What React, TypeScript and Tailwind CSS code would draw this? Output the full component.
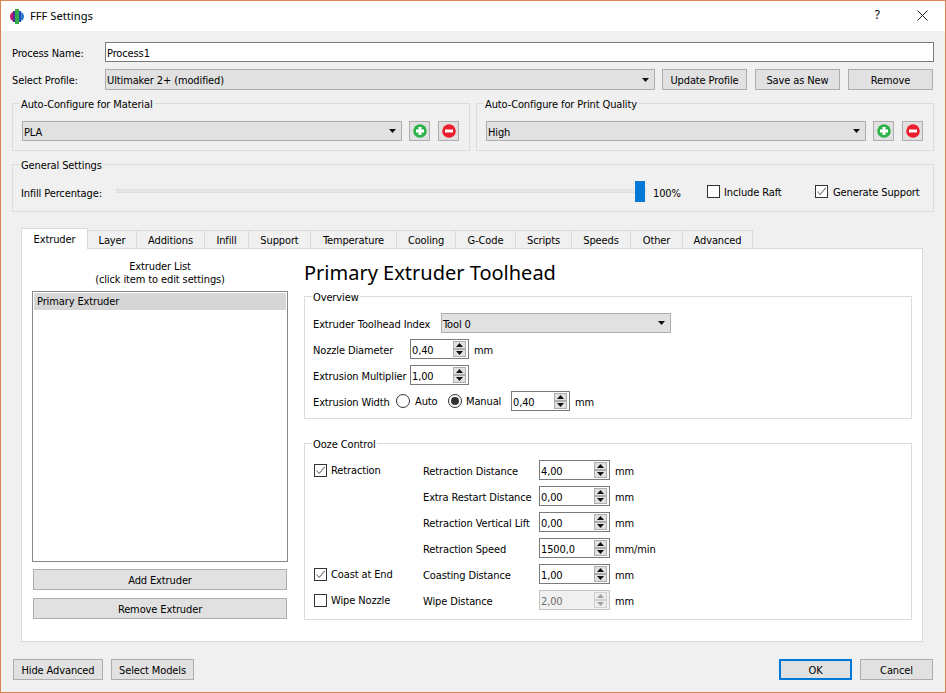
import type { ReactNode } from "react";

const tabs = [
  { name: "Layer", w: "w-[49px]" },
  { name: "Additions", w: "w-[68px]" },
  { name: "Infill", w: "w-[44px]" },
  { name: "Support", w: "w-[62px]" },
  { name: "Temperature", w: "w-[86px]" },
  { name: "Cooling", w: "w-[59px]" },
  { name: "G-Code", w: "w-[60px]" },
  { name: "Scripts", w: "w-[56px]" },
  { name: "Speeds", w: "w-[59px]" },
  { name: "Other", w: "w-[52px]" },
  { name: "Advanced", w: "w-[70px]" },
];

const oozeRows = [
  { label: "Retraction Distance", value: "4,00", unit: "mm" },
  { label: "Extra Restart Distance", value: "0,00", unit: "mm" },
  { label: "Retraction Vertical Lift", value: "0,00", unit: "mm" },
  { label: "Retraction Speed", value: "1500,0", unit: "mm/min" },
  { label: "Coasting Distance", value: "1,00", unit: "mm", check: "Coast at End", checked: true },
  { label: "Wipe Distance", value: "2,00", unit: "mm", check: "Wipe Nozzle", disabled: true },
];

function Button(props: { children: ReactNode; className?: string; focused?: boolean }) {
  return (
    <div
      className={`flex h-[21px] items-center justify-center bg-[#e1e1e1] pt-[2px] ${
        props.focused ? "border-2 border-[#0078d7]" : "border border-[#adadad]"
      } ${props.className ?? ""}`}
    >
      {props.children}
    </div>
  );
}

function Combo(props: { text: string; className?: string }) {
  return (
    <div
      className={`flex h-5 items-center justify-between border border-[#adadad] bg-[#e1e1e1] pl-px pr-[5px] ${props.className ?? ""}`}
    >
      <span className="pt-[2px]">{props.text}</span>
      <svg width="7" height="4" viewBox="0 0 7 4">
        <path d="M0 0h7L3.5 4z" fill="#111" />
      </svg>
    </div>
  );
}

function Group(props: { title: string; children: ReactNode; className?: string }) {
  return (
    <div className={`relative border border-[#dcdcdc] ${props.className ?? ""}`}>
      <span className="absolute left-[7px] top-[-6px] bg-[#f0f0f0] px-px leading-[13px]">
        {props.title}
      </span>
      {props.children}
    </div>
  );
}

function InnerGroup(props: { title: string; children: ReactNode; className?: string }) {
  return (
    <div className={`relative border border-[#dcdcdc] ${props.className ?? ""}`}>
      <span className="absolute left-[7px] top-[-6px] bg-white px-px leading-[13px]">
        {props.title}
      </span>
      {props.children}
    </div>
  );
}

function Check(props: { checked?: boolean }) {
  return (
    <span className="flex h-[13px] w-[13px] shrink-0 items-center justify-center border border-[#333] bg-white">
      {props.checked && (
        <svg width="11" height="11" viewBox="0 0 11 11" fill="none">
          <path d="M1.5 5.5 4.2 8.5 9.8 1.8" stroke="#7a7a7a" strokeWidth="1.1" />
        </svg>
      )}
    </span>
  );
}

function Radio(props: { checked?: boolean }) {
  return (
    <span className="flex h-[14px] w-[14px] shrink-0 items-center justify-center rounded-full border border-[#333] bg-white">
      {props.checked && <span className="h-2 w-2 rounded-full bg-[#333]" />}
    </span>
  );
}

function SpinArrow(props: { up?: boolean; disabled?: boolean }) {
  const fill = props.disabled ? "#a0a0a0" : "#111";
  return (
    <span
      className={`flex h-2 w-[13px] items-center justify-center border ${
        props.disabled ? "border-[#d0d0d0] bg-[#ececec]" : "border-[#adadad] bg-[#e1e1e1]"
      }`}
    >
      <svg width="7" height="4" viewBox="0 0 7 4">
        <path d={props.up ? "M3.5 0 7 4H0z" : "M0 0h7L3.5 4z"} fill={fill} />
      </svg>
    </span>
  );
}

function Spin(props: { value: string; className?: string; disabled?: boolean }) {
  return (
    <div
      className={`flex h-5 items-center justify-between border pl-px pr-[2px] ${
        props.disabled ? "border-[#c4c4c4] bg-[#f0f0f0] text-[#6d6d6d]" : "border-[#7a7a7a] bg-white"
      } ${props.className ?? ""}`}
    >
      <span className="pt-[2px]">{props.value}</span>
      <span className="flex flex-col">
        <SpinArrow up disabled={props.disabled} />
        <SpinArrow disabled={props.disabled} />
      </span>
    </div>
  );
}

function PlusMinus(props: { kind: "plus" | "minus" }) {
  return (
    <div className="flex h-5 w-[21px] shrink-0 items-center justify-center border border-[#adadad] bg-[#e1e1e1]">
      <svg width="14" height="14" viewBox="0 0 14 14">
        <circle cx="7" cy="7" r="6.8" fill={props.kind === "plus" ? "#2fb24c" : "#ed1c2e"} />
        {props.kind === "plus" ? (
          <path d="M5.5 3h3v2.5H11v3H8.5V11h-3V8.5H3v-3h2.5z" fill="#fff" />
        ) : (
          <path d="M3 5.5h8v3H3z" fill="#fff" />
        )}
      </svg>
    </div>
  );
}

function Logo() {
  return (
    <svg width="14" height="15" viewBox="0 0 14 15">
      <path d="M3 3Q0 4 0 7.5T3 12z" fill="#c2186f" />
      <path d="M3 2h2v11H3z" fill="#4a2f96" />
      <path d="M5 0h4v15H5z" fill="#35a84a" />
      <path d="M9 2h2v11H9z" fill="#1f4fb5" />
      <path d="M11 3q3 1 3 4.5T11 12z" fill="#2f7fd0" />
    </svg>
  );
}

export default function App() {
  return (
    <div className="flex h-[693px] w-[946px] flex-col border border-[#d9844f] bg-[#f0f0f0] font-['DejaVu_Sans_Condensed','Noto_Sans',sans-serif] text-[11px] leading-[13px] tracking-[-0.12px] text-black">
      <div className="flex h-[30px] shrink-0 items-center bg-white pl-[9px] tracking-normal">
        <Logo />
        <span className="mb-[2px] ml-[6px] font-['Noto_Sans',sans-serif] text-[11.2px]">FFF Settings</span>
        <span className="mb-[2px] ml-auto mr-[37px] font-['Noto_Sans',sans-serif] text-xs">?</span>
        <svg className="mb-px mr-[17px]" width="11" height="11" viewBox="0 0 11 11" fill="none">
          <path d="M.5.5l10 10M10.5.5l-10 10" stroke="#222" />
        </svg>
      </div>

      <div className="flex flex-1 flex-col px-[11px]">
        <div className="mt-[11px] flex h-5 items-center">
          <span className="w-[93px] pt-[2px]">Process Name:</span>
          <div className="flex h-5 flex-1 items-center border border-[#7a7a7a] bg-white pl-px pt-[2px]">Process1</div>
        </div>

        <div className="mt-[7px] flex items-center pr-px">
          <span className="w-[93px] pt-[2px]">Select Profile:</span>
          <Combo text="Ultimaker 2+ (modified)" className="h-[21px] flex-1" />
          <Button className="ml-[7px] w-[85px]">Update Profile</Button>
          <Button className="ml-2 w-[85px]">Save as New</Button>
          <Button className="ml-2 w-[85px]">Remove</Button>
        </div>

        <div className="mt-[13px] flex gap-[6px]">
          <Group title="Auto-Configure for Material" className="h-12 flex-1">
            <div className="flex gap-2 pl-[9px] pr-[10px] pt-[17px]">
              <Combo text="PLA" className="mr-[-1px] flex-1" />
              <PlusMinus kind="plus" />
              <PlusMinus kind="minus" />
            </div>
          </Group>
          <Group title="Auto-Configure for Print Quality" className="h-12 flex-1">
            <div className="flex gap-2 pl-[9px] pr-[10px] pt-[17px]">
              <Combo text="High" className="mr-[-1px] flex-1" />
              <PlusMinus kind="plus" />
              <PlusMinus kind="minus" />
            </div>
          </Group>
        </div>

        <Group title="General Settings" className="mt-[13px] h-12">
          <div className="flex h-[37px] items-end pl-2">
            <div className="flex h-[21px] items-center">
              <span className="w-[95px] pt-1">Infill Percentage:</span>
              <div className="relative h-[21px] w-[530px]">
                <div className="absolute left-0 right-0 top-2 h-1 border border-[#dcdfdf] bg-[#e6e8e8]" />
                <div className="absolute right-px top-0 h-[21px] w-[10px] bg-[#0078d7]" />
              </div>
              <span className="ml-[7px] w-[54px] pt-1">100%</span>
              <div className="flex w-[108px] items-center gap-1">
                <Check />
                <span className="pt-[2px]">Include Raft</span>
              </div>
              <div className="flex items-center gap-[5px]">
                <Check checked />
                <span className="pt-[2px]">Generate Support</span>
              </div>
            </div>
          </div>
        </Group>

        <div className="ml-[9px] mr-[11px] mt-4 flex flex-col">
          <div className="relative z-10 flex h-[21px] items-end">
            <div className="flex h-[21px] w-[67px] items-center justify-center border border-b-0 border-[#d9d9d9] bg-white">
              Extruder
            </div>
            {tabs.map((t) => (
              <div
                key={t.name}
                className={`flex h-[19px] items-center justify-center border-t border-r border-[#d9d9d9] ${t.w}`}
              >
                {t.name}
              </div>
            ))}
          </div>

          <div className="mt-[-1px] flex h-[394px] border border-[#d9d9d9] bg-white pl-[10px] pr-[10px]">
            <div className="flex w-[256px] flex-col">
              <div className="pt-[11px] text-center">
                Extruder List
                <br />
                (click item to edit settings)
              </div>
              <div className="mt-[5px] h-[271px] border border-[#828790] p-px">
                <div className="flex h-[17px] items-center bg-[#d6d6d6] pl-[3px]">Primary Extruder</div>
              </div>
              <Button className="mx-px mt-[7px]">Add Extruder</Button>
              <Button className="mx-px mt-2">Remove Extruder</Button>
            </div>

            <div className="ml-4 flex w-[608px] flex-col">
              <div className="pt-3 font-['Noto_Sans',sans-serif] text-[20px] leading-6 tracking-normal">
                Primary Extruder Toolhead
              </div>

              <InnerGroup title="Overview" className="mt-[11px] h-[123px] pl-2 pt-4">
                <div className="flex items-center">
                  <span className="w-[128px] pt-[2px]">Extruder Toolhead Index</span>
                  <Combo text="Tool 0" className="w-[230px]" />
                </div>
                <div className="mt-[6px] flex items-center">
                  <span className="w-[97px] pt-[2px]">Nozzle Diameter</span>
                  <Spin value="0,40" className="w-[59px]" />
                  <span className="ml-[5px] pt-[2px]">mm</span>
                </div>
                <div className="mt-[6px] flex items-center">
                  <span className="w-[97px] pt-[2px]">Extrusion Multiplier</span>
                  <Spin value="1,00" className="w-[59px]" />
                </div>
                <div className="mt-[6px] flex items-center">
                  <span className="w-[83px] pt-[2px]">Extrusion Width</span>
                  <Radio />
                  <span className="ml-[5px] w-[33px]">Auto</span>
                  <Radio checked />
                  <span className="ml-1 w-[45px]">Manual</span>
                  <Spin value="0,40" className="w-[59px]" />
                  <span className="ml-[5px] pt-[2px]">mm</span>
                </div>
              </InnerGroup>

              <InnerGroup title="Ooze Control" className="mt-6 flex h-[177px] flex-col gap-[6px] pl-[9px] pt-4">
                {oozeRows.map((r, i) => (
                  <div key={r.label} className="flex h-5 items-center">
                    <div className="flex w-[109px] items-center gap-1">
                      {i === 0 && (
                        <>
                          <Check checked />
                          <span>Retraction</span>
                        </>
                      )}
                      {r.check && (
                        <>
                          <Check checked={r.checked} />
                          <span>{r.check}</span>
                        </>
                      )}
                    </div>
                    <span className="w-[116px] pt-[2px]">{r.label}</span>
                    <Spin value={r.value} disabled={r.disabled} className="w-[71px]" />
                    <span className="ml-[5px] pt-[2px]">{r.unit}</span>
                  </div>
                ))}
              </InnerGroup>
            </div>
          </div>
        </div>

        <div className="mt-[17px] flex pl-px pr-px">
          <Button className="w-[90px]">Hide Advanced</Button>
          <Button className="ml-2 w-[83px]">Select Models</Button>
          <Button focused className="ml-auto w-[73px]">OK</Button>
          <Button className="ml-2 w-[73px]">Cancel</Button>
        </div>
      </div>
    </div>
  );
}
